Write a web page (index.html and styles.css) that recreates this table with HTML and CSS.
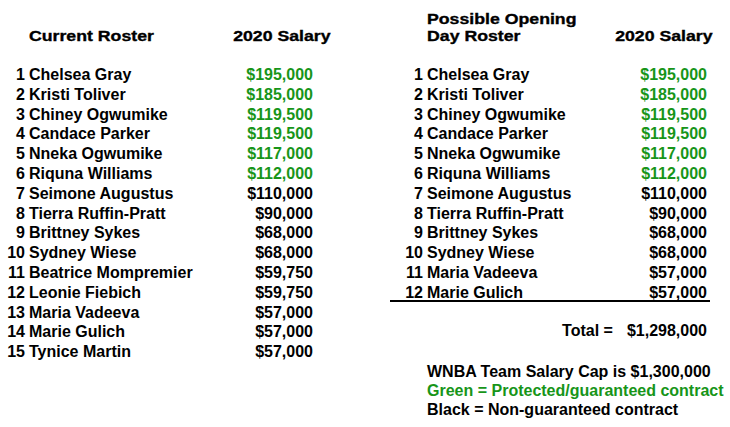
FILE: index.html
```html
<!DOCTYPE html>
<html>
<head>
<meta charset="utf-8">
<link rel="stylesheet" href="styles.css">
</head>
<body>
<div class="page">
  <section class="panel current">
    <div class="head">
      <div class="h-name"><span class="h">Current Roster</span></div>
      <div class="h-sal"><span class="h">2020 Salary</span></div>
    </div>
    <div class="rows">
      <div class="row"><span class="num">1</span><span class="name">Chelsea Gray</span><span class="sal g">$195,000</span></div>
      <div class="row"><span class="num">2</span><span class="name">Kristi Toliver</span><span class="sal g">$185,000</span></div>
      <div class="row"><span class="num">3</span><span class="name">Chiney Ogwumike</span><span class="sal g">$119,500</span></div>
      <div class="row"><span class="num">4</span><span class="name">Candace Parker</span><span class="sal g">$119,500</span></div>
      <div class="row"><span class="num">5</span><span class="name">Nneka Ogwumike</span><span class="sal g">$117,000</span></div>
      <div class="row"><span class="num">6</span><span class="name">Riquna Williams</span><span class="sal g">$112,000</span></div>
      <div class="row"><span class="num">7</span><span class="name">Seimone Augustus</span><span class="sal">$110,000</span></div>
      <div class="row"><span class="num">8</span><span class="name">Tierra Ruffin-Pratt</span><span class="sal">$90,000</span></div>
      <div class="row"><span class="num">9</span><span class="name">Brittney Sykes</span><span class="sal">$68,000</span></div>
      <div class="row"><span class="num">10</span><span class="name">Sydney Wiese</span><span class="sal">$68,000</span></div>
      <div class="row"><span class="num">11</span><span class="name">Beatrice Mompremier</span><span class="sal">$59,750</span></div>
      <div class="row"><span class="num">12</span><span class="name">Leonie Fiebich</span><span class="sal">$59,750</span></div>
      <div class="row"><span class="num">13</span><span class="name">Maria Vadeeva</span><span class="sal">$57,000</span></div>
      <div class="row"><span class="num">14</span><span class="name">Marie Gulich</span><span class="sal">$57,000</span></div>
      <div class="row"><span class="num">15</span><span class="name">Tynice Martin</span><span class="sal">$57,000</span></div>
    </div>
  </section>
  <section class="panel opening">
    <div class="head">
      <div class="h-name"><span class="h">Possible Opening<br>Day Roster</span></div>
      <div class="h-sal"><span class="h">2020 Salary</span></div>
    </div>
    <div class="rows">
      <div class="row"><span class="num">1</span><span class="name">Chelsea Gray</span><span class="sal g">$195,000</span></div>
      <div class="row"><span class="num">2</span><span class="name">Kristi Toliver</span><span class="sal g">$185,000</span></div>
      <div class="row"><span class="num">3</span><span class="name">Chiney Ogwumike</span><span class="sal g">$119,500</span></div>
      <div class="row"><span class="num">4</span><span class="name">Candace Parker</span><span class="sal g">$119,500</span></div>
      <div class="row"><span class="num">5</span><span class="name">Nneka Ogwumike</span><span class="sal g">$117,000</span></div>
      <div class="row"><span class="num">6</span><span class="name">Riquna Williams</span><span class="sal g">$112,000</span></div>
      <div class="row"><span class="num">7</span><span class="name">Seimone Augustus</span><span class="sal">$110,000</span></div>
      <div class="row"><span class="num">8</span><span class="name">Tierra Ruffin-Pratt</span><span class="sal">$90,000</span></div>
      <div class="row"><span class="num">9</span><span class="name">Brittney Sykes</span><span class="sal">$68,000</span></div>
      <div class="row"><span class="num">10</span><span class="name">Sydney Wiese</span><span class="sal">$68,000</span></div>
      <div class="row"><span class="num">11</span><span class="name">Maria Vadeeva</span><span class="sal">$57,000</span></div>
      <div class="row"><span class="num">12</span><span class="name">Marie Gulich</span><span class="sal">$57,000</span></div>
    </div>
    <div class="rule"></div>
    <div class="total"><span>Total =</span><span>$1,298,000</span></div>
    <div class="legend">
      <div>WNBA Team Salary Cap is $1,300,000</div>
      <div class="g">Green = Protected/guaranteed contract</div>
      <div>Black = Non-guaranteed contract</div>
    </div>
  </section>
</div>
</body>
</html>
```
FILE: styles.css
```css
body {
  margin: 0;
  background: #fff;
  color: #000;
  font-family: "Liberation Sans", Arial, sans-serif;
  font-weight: 700;
  font-size: 16px;
}
.page {
  display: flex;
  gap: 77px;
  padding-top: 9.5px;
}
.panel.current { width: 313px; }
.panel.opening { width: 320px; }
.head {
  display: flex;
  justify-content: space-between;
  align-items: flex-end;
  height: 34px;
  font-size: 15px;
  line-height: 17px;
}
.current .head { padding-left: 29px; margin-right: -18px; }
.opening .head { padding-left: 37px; margin-right: -3px; }
.h {
  display: inline-block;
  transform: scaleX(1.18);
  white-space: nowrap;
  -webkit-text-stroke: 0.35px #000;
}
.h-name .h { transform-origin: left bottom; }
.h-sal .h { transform-origin: right bottom; }
.rows { margin-top: 21.6px; }
.row {
  display: grid;
  grid-template-columns: 25px 1fr auto;
  column-gap: 4px;
  height: 19.8px;
  line-height: 19.8px;
  white-space: nowrap;
}
.opening .row { grid-template-columns: 33px 1fr auto; padding-right: 3px; }
.num { text-align: right; }
.sal { text-align: right; }
.g { color: #179519; }
.rule { height: 2px; background: #000; margin-top: -3px; }
.total {
  display: flex;
  justify-content: flex-end;
  gap: 14px;
  padding-right: 3px;
  margin-top: 19.5px;
  line-height: 19.8px;
}
.legend {
  margin-top: 21px;
  padding-left: 37px;
  white-space: nowrap;
  line-height: 19px;
}
```
